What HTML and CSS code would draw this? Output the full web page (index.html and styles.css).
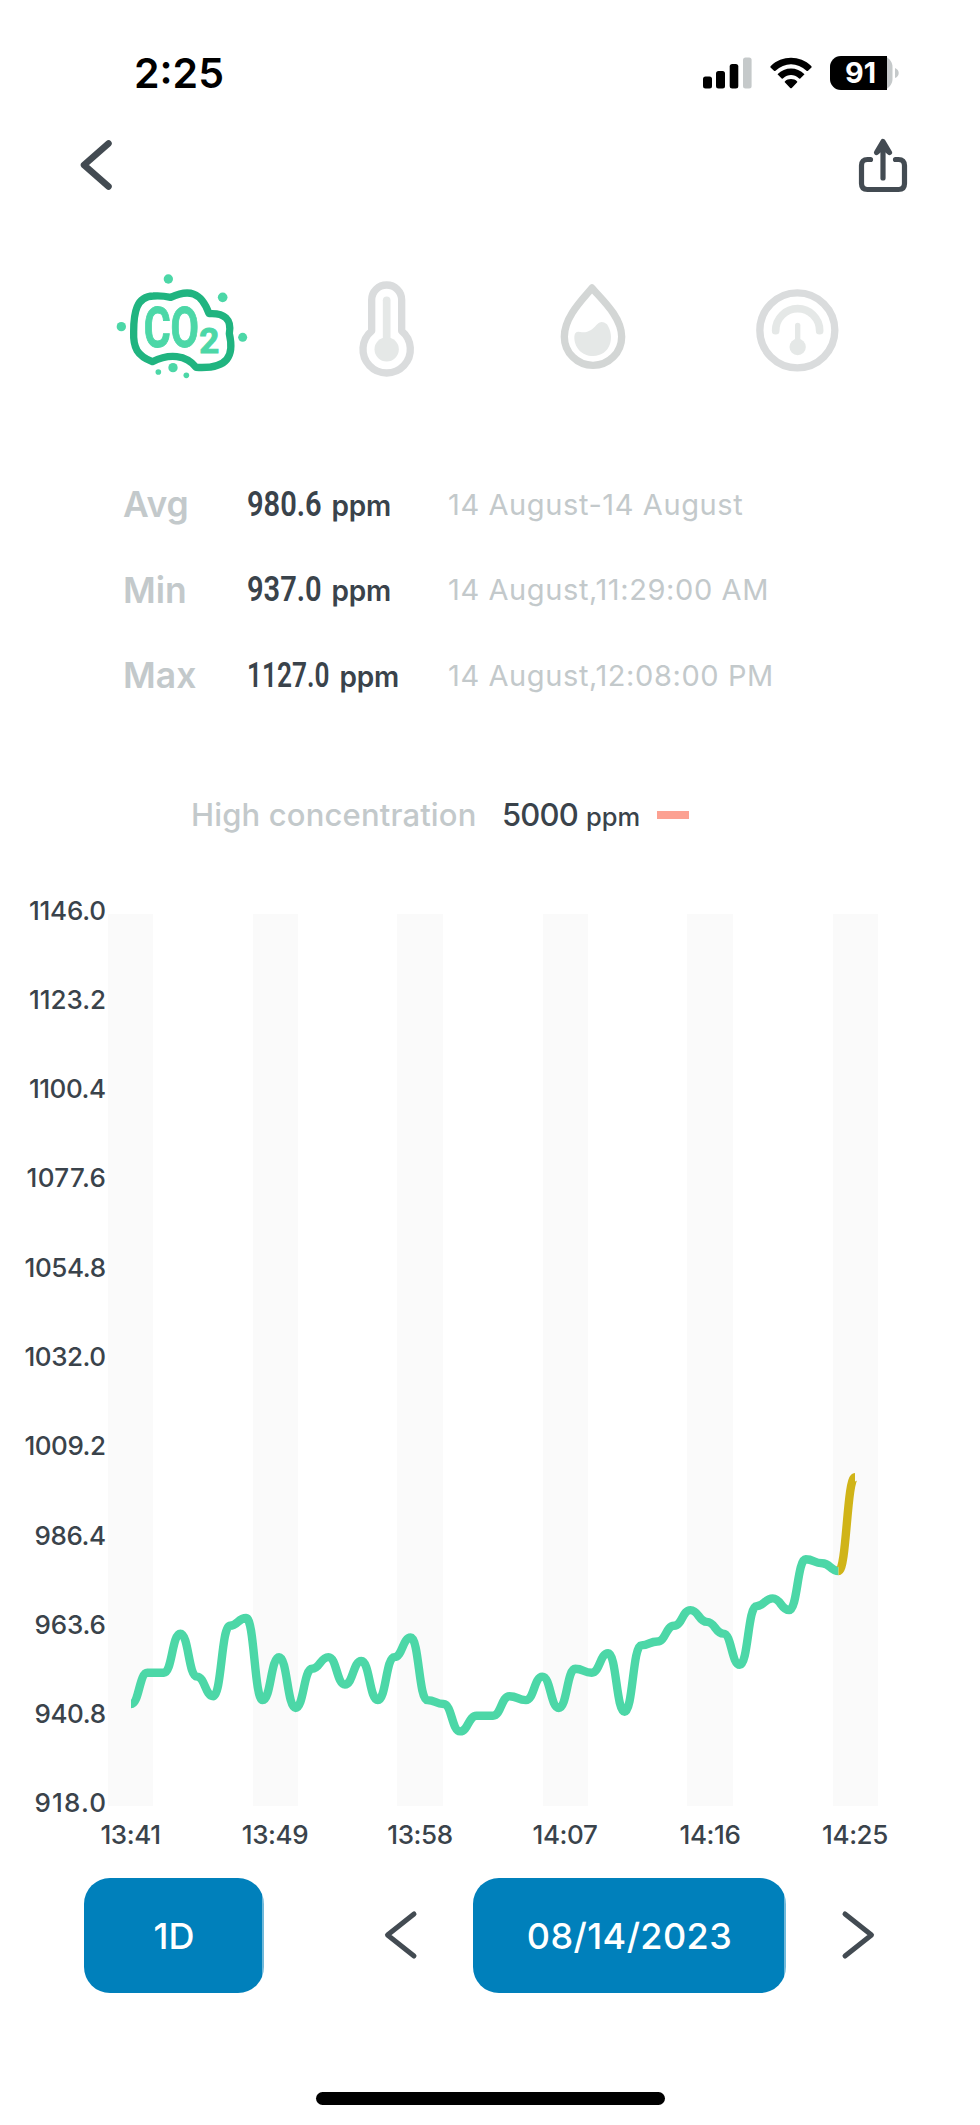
FILE: index.html
```html
<!DOCTYPE html>
<html lang="en">
<head>
    <meta charset="UTF-8">
    <meta name="viewport" content="width=device-width, initial-scale=1.0">
    <title>CO2 History</title>
    <link rel="stylesheet" href="styles.css">
</head>
<body>
    <div class="status-bar">
        <span class="time">2:25</span>
        <div class="status-icons">
            <svg class="signal" width="50" height="34" viewBox="0 0 50 34">
                <rect x="0" y="19.500" width="9" height="12" rx="2.500"/>
                <rect x="13" y="14" width="9" height="17.500" rx="2.500"/>
                <rect x="26.700" y="7" width="8.600" height="24.500" rx="2.500"/>
                <rect class="off" x="40" y="0.500" width="8.600" height="31" rx="2.500"/>
            </svg>
            <svg class="wifi" width="42" height="34" viewBox="0 0 42 34">
                <path d="M0.500 10.500Q0 9.600 0.800 8.900C12-2 30-2 41.200 8.900Q42 9.600 41.500 10.500L38 13.800Q37.300 14.300 36.500 13.700C27.500 5 14.500 5 5.500 13.700Q4.700 14.300 4 13.800Z"/>
                <path d="M7.500 17.200C15 9.500 27 9.500 34.500 17.200L30.300 21.400Q29.500 21.900 28.800 21.300C24 17 18 17 13.200 21.300Q12.500 21.900 11.700 21.400Z"/>
                <path d="M14.800 24.400C18 21.300 24 21.300 27.200 24.400Q27.600 25 27 25.600L21.800 31Q21 31.700 20.200 31L15 25.600Q14.400 25 14.800 24.400Z"/>
            </svg>
            <svg class="battery" width="70" height="34" viewBox="0 0 70 34">
                <rect class="off" x="0" y="0" width="62.500" height="34" rx="11"/>
                <path d="M11 0H57V34H11A11 11 0 0 1 0 23V11A11 11 0 0 1 11 0Z"/>
                <path class="off" d="M65 12Q68.700 13.500 68.700 17T65 22Z"/>
                <text x="30.500" y="27" textLength="31" lengthAdjust="spacingAndGlyphs">91</text>
            </svg>
        </div>
    </div>

    <div class="header">
        <svg class="line-icon" width="32" height="50" viewBox="0 0 32 50">
            <path d="M28.500 3.500L4 25L28.500 46.500"/>
        </svg>
        <svg class="line-icon share" width="50" height="56" viewBox="0 0 50 56">
            <path d="M12.500 22.500H9.500Q3.500 22.500 3.500 28.500V46.500Q3.500 52.500 9.500 52.500H40.500Q46.500 52.500 46.500 46.500V28.500Q46.500 22.500 40.500 22.500H37.500"/>
            <path d="M25 7V41"/>
            <path class="tip" d="M18.500 15.500L25 4.500L31.500 15.500L25 10Z"/>
        </svg>
    </div>

    <div class="tabs">
        <svg class="tab co2" width="140" height="110" viewBox="39 30 420 330">
            <path d="M157 305C112 287 99 264 101 215C101 158 109 109 160 108Q185 106 212 112C266 87 304 95 327 161C373 158 396 178 388 221C403 286 386 328 288 322C259 284 207 280 157 305Z"/>
            <circle cx="205" cy="57" r="14"/>
            <circle cx="368" cy="112" r="14.500"/>
            <circle cx="64" cy="200" r="14"/>
            <circle cx="428" cy="232" r="13.500"/>
            <circle cx="219" cy="323" r="14"/>
            <circle cx="175" cy="336" r="8.500"/>
            <circle cx="259" cy="346" r="8.500"/>
            <text x="131" y="260" textLength="166" lengthAdjust="spacingAndGlyphs">CO</text>
            <text class="two" x="298" y="278" textLength="60" lengthAdjust="spacingAndGlyphs">2</text>
        </svg>
        <svg class="tab temperature" width="65" height="110" viewBox="765 30 195 330">
            <path class="outline" d="M815 213V120A45 45 0 0 1 905 120V213A71 71 0 1 1 815 213Z"/>
            <path class="stem" d="M860 121V250"/>
            <circle cx="860" cy="268" r="36.500"/>
        </svg>
        <svg class="tab humidity" width="75" height="110" viewBox="75 30 225 330">
            <path class="outline" d="M186 84C160 116 103 170 103 230A86 86 0 0 0 275 230C275 170 213 116 186 84Z"/>
            <path class="fill" d="M133 230Q134 212 151 216C175 219 185 210 200 194Q213 179 231 193C256 230 242 288 189 288C156 288 132 262 133 230Z"/>
        </svg>
        <svg class="tab pressure" width="95" height="110" viewBox="660 30 285 330">
            <circle class="outline" cx="802" cy="211" r="112.500"/>
            <path class="stem" d="M737 212A66 66 0 0 1 869 212"/>
            <path class="needle" d="M803 196V258"/>
            <circle cx="803" cy="261" r="24.500"/>
        </svg>
    </div>

    <div class="stats">
        <span class="label">Avg</span>
        <span class="value"><b class="number">980.6</b><span class="unit">ppm</span></span>
        <span class="date">14 August-14 August</span>
        <span class="label">Min</span>
        <span class="value"><b class="number">937.0</b><span class="unit">ppm</span></span>
        <span class="date">14 August,11:29:00 AM</span>
        <span class="label">Max</span>
        <span class="value"><b class="number wide">1127.0</b><span class="unit">ppm</span></span>
        <span class="date">14 August,12:08:00 PM</span>
    </div>

    <div class="legend">
        <span class="legend-label">High concentration</span>
        <span class="legend-number">5000</span>
        <span class="legend-unit">ppm</span>
        <span class="legend-mark"></span>
    </div>

    <svg class="chart" width="980" height="1015" viewBox="0 845 980 1015">
        <g class="bands">
            <rect x="108" y="914" width="45" height="892"/>
            <rect x="253" y="914" width="45" height="892"/>
            <rect x="397" y="914" width="46" height="892"/>
            <rect x="543" y="914" width="45" height="892"/>
            <rect x="687" y="914" width="46" height="892"/>
            <rect x="833" y="914" width="45" height="892"/>
        </g>
        <g class="y-axis">
            <text x="106" y="919.500" textLength="77">1146.0</text>
            <text x="106" y="1009" textLength="77">1123.2</text>
            <text x="106" y="1098" textLength="77">1100.4</text>
            <text x="106" y="1187" textLength="79.500">1077.6</text>
            <text x="106" y="1276.500" textLength="81.500">1054.8</text>
            <text x="106" y="1365.500" textLength="81.500">1032.0</text>
            <text x="106" y="1455" textLength="81.500">1009.2</text>
            <text x="106" y="1544.500" textLength="71.500">986.4</text>
            <text x="106" y="1633.500" textLength="71.500">963.6</text>
            <text x="106" y="1722.500" textLength="71.500">940.8</text>
            <text x="106" y="1811.500" textLength="71.500">918.0</text>
        </g>
        <g class="x-axis">
            <text x="130.500" y="1844">13:41</text>
            <text x="275" y="1844">13:49</text>
            <text x="420" y="1844">13:58</text>
            <text x="565" y="1844">14:07</text>
            <text x="710" y="1844">14:16</text>
            <text x="855" y="1844">14:25</text>
        </g>
        <path class="line" id="line"/>
        <path class="line last" id="lineLast"/>
    </svg>

    <div class="controls">
        <button class="btn range">1D</button>
        <svg class="arrow prev" width="34" height="48" viewBox="0 0 34 48">
            <path d="M30 3L3.500 24L30 45"/>
        </svg>
        <button class="btn day">08/14/2023</button>
        <svg class="arrow next" width="34" height="48" viewBox="0 0 34 48">
            <path d="M4 3L30.500 24L4 45"/>
        </svg>
    </div>

    <div class="home-indicator"></div>

    <script src="chart.js"></script>
</body>
</html>
```

FILE: styles.css
```css
body { margin: 0; width: 980px; height: 2125px; overflow: hidden; background: #fff; color: #3a434b; font-family: Inter, "Liberation Sans", sans-serif; }
svg { display: block; flex: none; overflow: visible; }
span { white-space: nowrap; }

.status-bar { display: flex; align-items: center; justify-content: space-between; box-sizing: border-box; height: 138px; padding: 9px 80px 0 134px; color: #000; }
.time { margin-bottom: 1px; font-size: 41px; font-weight: 600; line-height: 50px; }
.status-icons { display: flex; }
.status-icons .off { fill: #c5c9ca; }
.signal { margin: 1px 17px 0 0; }
.wifi { margin: 1px 18px 0 0; }
.battery text { fill: #fff; font-size: 29px; font-weight: 700; text-anchor: middle; }

.header { display: flex; align-items: center; justify-content: space-between; height: 54px; padding: 0 72px 0 80px; }
.line-icon path { fill: none; stroke: #434b52; stroke-width: 6.5; stroke-linecap: round; stroke-linejoin: round; }
.share path { stroke-width: 5.2; }
.share .tip { fill: #434b52; }

.tabs { display: flex; margin-top: 78px; padding-left: 113px; }
.co2 path { fill: none; stroke: #20b480; stroke-width: 22; stroke-linejoin: round; }
.co2 circle, .co2 text { fill: #4cd7a7; }
.co2 text { stroke: #4cd7a7; stroke-width: 3; font-family: Roboto, sans-serif; font-size: 168px; font-weight: 700; }
.co2 .two { font-size: 107px; }
.temperature { margin-left: 102px; }
.humidity { margin-left: 135px; }
.pressure { margin-left: 120px; }
.outline { fill: none; stroke: #dadcdd; stroke-width: 22; stroke-linejoin: round; }
.humidity .outline { stroke: #d3d6d5; }
.stem { fill: none; stroke: #e5e8e7; stroke-width: 23; stroke-linecap: round; }
.needle { stroke: #e5e8e7; stroke-width: 16; stroke-linecap: round; }
.temperature circle, .humidity .fill, .pressure circle:not(.outline) { fill: #e5e8e7; }

.stats { display: grid; grid-template-columns: 124px 201px auto; grid-auto-rows: 85.5px; align-items: center; margin-top: 82px; padding-left: 123px; }
.label { color: #c3c9cb; font-size: 35.500px; font-weight: 600; }
.value { display: flex; align-items: baseline; margin-bottom: 1px; }
.number { width: 84.500px; font-family: Roboto, sans-serif; font-size: 35px; font-weight: 600; transform: scaleX(.83); transform-origin: left; }
.number.wide { width: 92.500px; transform: scaleX(.75); }
.unit { font-size: 28px; font-weight: 600; letter-spacing: -.2px; }
.date { margin-bottom: 1px; color: #c3c9cb; font-size: 29px; letter-spacing: .6px; }

.legend { display: flex; align-items: baseline; height: 40px; margin-top: 76px; padding-left: 191px; line-height: 40px; }
.legend-label { width: 311px; color: #c3c9cb; font-size: 31px; font-weight: 500; letter-spacing: .15px; }
.legend-number { width: 84px; font-size: 31px; font-weight: 500; letter-spacing: -.8px; }
.legend-unit { width: 71px; font-size: 25.500px; font-weight: 500; }
.legend-mark { align-self: center; width: 32px; height: 8px; background: #fca192; }

.chart { margin-top: 10.750px; }
.chart text { fill: #3a434b; font-size: 26px; font-weight: 500; }
.bands rect { fill: #fafafa; }
.y-axis text { text-anchor: end; }
.x-axis text { text-anchor: middle; letter-spacing: -.4px; }
.line { fill: none; stroke: #4cd7a7; stroke-width: 8.4; stroke-linejoin: round; }
.line.last { stroke: #d0b418; }

.controls { display: flex; align-items: center; height: 115px; margin-top: 18px; padding-left: 84px; }
.btn { box-sizing: border-box; height: 115px; padding: 0; border: 0; border-radius: 26px; background: linear-gradient(to left, #71b9da 2px, #0080bb 2px); color: #fff; font-family: Inter, sans-serif; font-size: 36px; font-weight: 500; }
.range { width: 180px; }
.day { width: 313px; letter-spacing: .4px; }
.arrow { margin-bottom: 2px; }
.arrow path { fill: none; stroke: #434b52; stroke-width: 5; stroke-linecap: round; stroke-linejoin: round; }
.prev { margin-left: 120px; margin-right: 55px; }
.next { margin-left: 55px; }

.home-indicator { width: 349px; height: 13px; margin: 99px 0 0 316px; border-radius: 7px; background: #000; }
```

FILE: chart.js
```javascript
// one reading per minute, in ppm
const readings = [
    944, 952, 952, 962, 951, 946, 964, 966, 945, 956, 943, 953, 956, 949, 955,
    945, 956, 961, 945, 944, 937, 941, 941, 946, 945, 951, 943, 953, 952, 957,
    942, 959, 960, 964, 968, 965, 962, 954, 969, 971, 968, 981, 980, 978, 1002
];

const plot = { left: 131, right: 855, top: 914, bottom: 1805.7 };
const min = 918, max = 1146;

const points = readings.map((value, i) => [
    plot.left + i * (plot.right - plot.left) / (readings.length - 1),
    plot.bottom - (value - min) * (plot.bottom - plot.top) / (max - min)
]);

// smooth line that is flat at every reading
function buildPath(pts) {
    let d = `M${pts[0][0]} ${pts[0][1]}`;
    for (let i = 1; i < pts.length; i++) {
        const mid = (pts[i - 1][0] + pts[i][0]) / 2;
        d += `C${mid} ${pts[i - 1][1]} ${mid} ${pts[i][1]} ${pts[i][0]} ${pts[i][1]}`;
    }
    return d;
}

document.getElementById('line').setAttribute('d', buildPath(points.slice(0, -1)));
document.getElementById('lineLast').setAttribute('d', buildPath(points.slice(-2)));
```
